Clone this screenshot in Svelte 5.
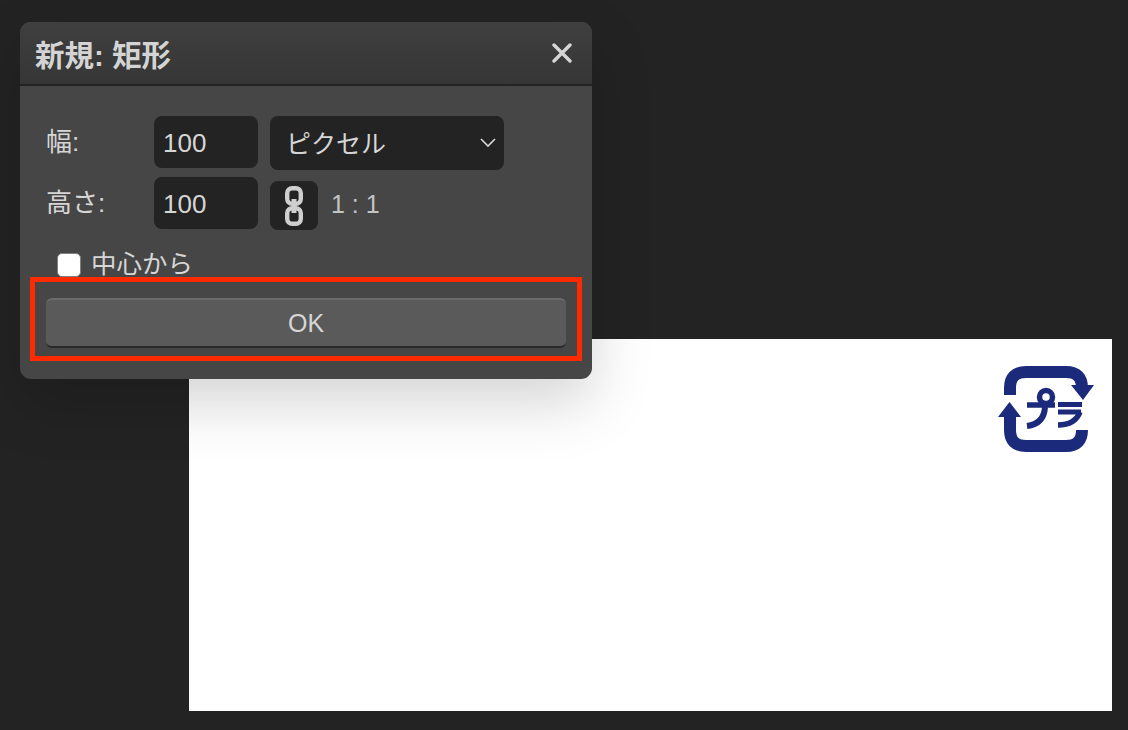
<script>
	let fromCenter = $state(false);
	let width = $state('100');
	let height = $state('100');
</script>

<div class="page">
	<div class="canvas">
		<svg class="logo" viewBox="0 0 130 115" width="130" height="115" aria-label="プラ">
			<g fill="none" stroke="#1b2a7b">
				<path stroke-width="12" d="M30 45V38Q30 22 46 22H86Q102 22 102 38V40" />
				<path stroke-width="12" d="M30 65V80Q30 96 46 96H86Q102 96 102 80" />
				<path stroke-width="5.5" d="M47 55H75" />
				<path stroke-width="6" d="M65 57Q64 74 47 76" />
				<path stroke-width="5" d="M78 54.5H102M78 62H101" />
				<path stroke-width="5.5" d="M78 75Q95 75 100 62" />
			</g>
			<circle cx="66" cy="47" r="6.5" fill="#fff" stroke="#1b2a7b" stroke-width="5.5" />
			<path fill="#1b2a7b" d="M91 35H114L103 50ZM18 67H41L29.5 52Z" />
		</svg>
	</div>

	<section class="dialog">
		<header class="title-bar">
			<h1>新規: 矩形</h1>
			<svg class="close" viewBox="0 0 20 20" width="20" height="20" aria-label="閉じる">
				<path d="M2 2L18 18M18 2L2 18" stroke="#d6d6d6" stroke-width="3.4" stroke-linecap="round" />
			</svg>
		</header>
		<div class="body">
			<div class="fields">
				<span class="label">幅:</span>
				<input class="num" bind:value={width} />
				<div class="select">
					<span>ピクセル</span>
					<svg viewBox="0 0 16 10" width="16" height="10">
						<path d="M1 1L8 8L15 1" fill="none" stroke="#d6d6d6" stroke-width="1.6" />
					</svg>
				</div>
				<span class="label">高さ:</span>
				<input class="num" bind:value={height} />
				<div class="ratio">
					<button class="link" aria-label="リンク">
						<svg viewBox="0 0 18 40" width="18" height="40">
							<g fill="none" stroke="#cfcfcf">
								<rect x="2.2" y="2.2" width="13.6" height="15.6" rx="5" stroke-width="4.4" />
								<rect x="2.2" y="22.2" width="13.6" height="15.6" rx="5" stroke-width="4.4" />
								<path d="M9 13V27" stroke-width="5" />
							</g>
						</svg>
					</button>
					<span class="ratio-text">1 : 1</span>
				</div>
			</div>
			<label class="check">
				<input type="checkbox" bind:checked={fromCenter} />
				<span>中心から</span>
			</label>
			<div class="highlight">
				<button class="ok">OK</button>
			</div>
		</div>
	</section>
</div>

<style>
	:global(body) {
		background: #232323;
	}

	.page {
		position: relative;
		width: 1128px;
		height: 730px;
		padding: 339px 16px 19px 189px;
		box-sizing: border-box;
		font-family: "Liberation Sans", "Noto Sans CJK JP", sans-serif;
		color: #d6d6d6;
	}

	.canvas {
		display: flex;
		justify-content: flex-end;
		height: 372px;
		background: #fff;
	}

	.logo {
		margin-top: 11px;
		margin-right: 2px;
	}

	.dialog {
		position: absolute;
		left: 20px;
		top: 22px;
		width: 572px;
		height: 357px;
		border-radius: 11px;
		background: #464646;
		box-shadow: 0 24px 60px rgba(0, 0, 0, 0.17);
		overflow: hidden;
	}

	.title-bar {
		display: flex;
		align-items: center;
		justify-content: space-between;
		height: 62px;
		padding: 0 20px 0 15px;
		background: linear-gradient(#3f3f3f, #363636);
		border-top: 1px solid #555;
		border-bottom: 2px solid #232323;
		margin-top: -1px;
	}

	h1 {
		margin: 0;
		font-size: 29.5px;
		font-weight: 700;
		color: #d4d4d4;
	}

	.body {
		padding: 30px 10px 0;
	}

	.fields {
		display: grid;
		grid-template-columns: 96px 104px 1fr;
		grid-template-rows: 52px 52px;
		row-gap: 9px;
		column-gap: 12px;
		padding-left: 16px;
		align-items: start;
	}

	.label {
		font-size: 26px;
		line-height: 52px;
		white-space: nowrap;
	}

	.num {
		width: 104px;
		height: 52px;
		padding: 2px 9px 0;
		box-sizing: border-box;
		border: none;
		border-radius: 8px;
		background: #232323;
		color: #d6d6d6;
		font: 26px "Liberation Sans", sans-serif;
		outline: none;
	}

	.select {
		display: flex;
		align-items: center;
		justify-content: space-between;
		width: 234px;
		height: 54px;
		padding: 0 8px 0 16px;
		box-sizing: border-box;
		border-radius: 8px;
		background: #232323;
		font-size: 25px;
	}

	.select span {
		margin-top: -2px;
	}

	.ratio {
		display: flex;
		align-items: center;
		gap: 13px;
		padding-top: 4px;
	}

	.link {
		display: flex;
		align-items: center;
		justify-content: center;
		width: 48px;
		height: 49px;
		padding: 0;
		border: none;
		border-radius: 8px;
		background: #232323;
	}

	.ratio-text {
		font-size: 25px;
		color: #c4c4c4;
		margin-top: -2px;
	}

	.check {
		display: flex;
		align-items: center;
		gap: 10px;
		height: 24px;
		margin: 24px 0 0 27px;
		font-size: 25.5px;
	}

	.check span {
		margin-top: -7px;
	}

	.check input {
		appearance: none;
		width: 24px;
		height: 24px;
		margin: 0;
		border-radius: 5px;
		background: #fff;
		border: 1px solid #808080;
		box-sizing: border-box;
	}

	.highlight {
		height: 84px;
		padding: 16px 11px 0;
		box-sizing: border-box;
		border: 5px solid #ff2a00;
	}

	.ok {
		display: block;
		width: 100%;
		height: 50px;
		border: none;
		border-top: 2px solid #6a6a6a;
		border-bottom: 2px solid #2a2a2a;
		border-radius: 6px;
		background: #5a5a5a;
		color: #d6d6d6;
		font: 25px "Liberation Sans", sans-serif;
	}
</style>
